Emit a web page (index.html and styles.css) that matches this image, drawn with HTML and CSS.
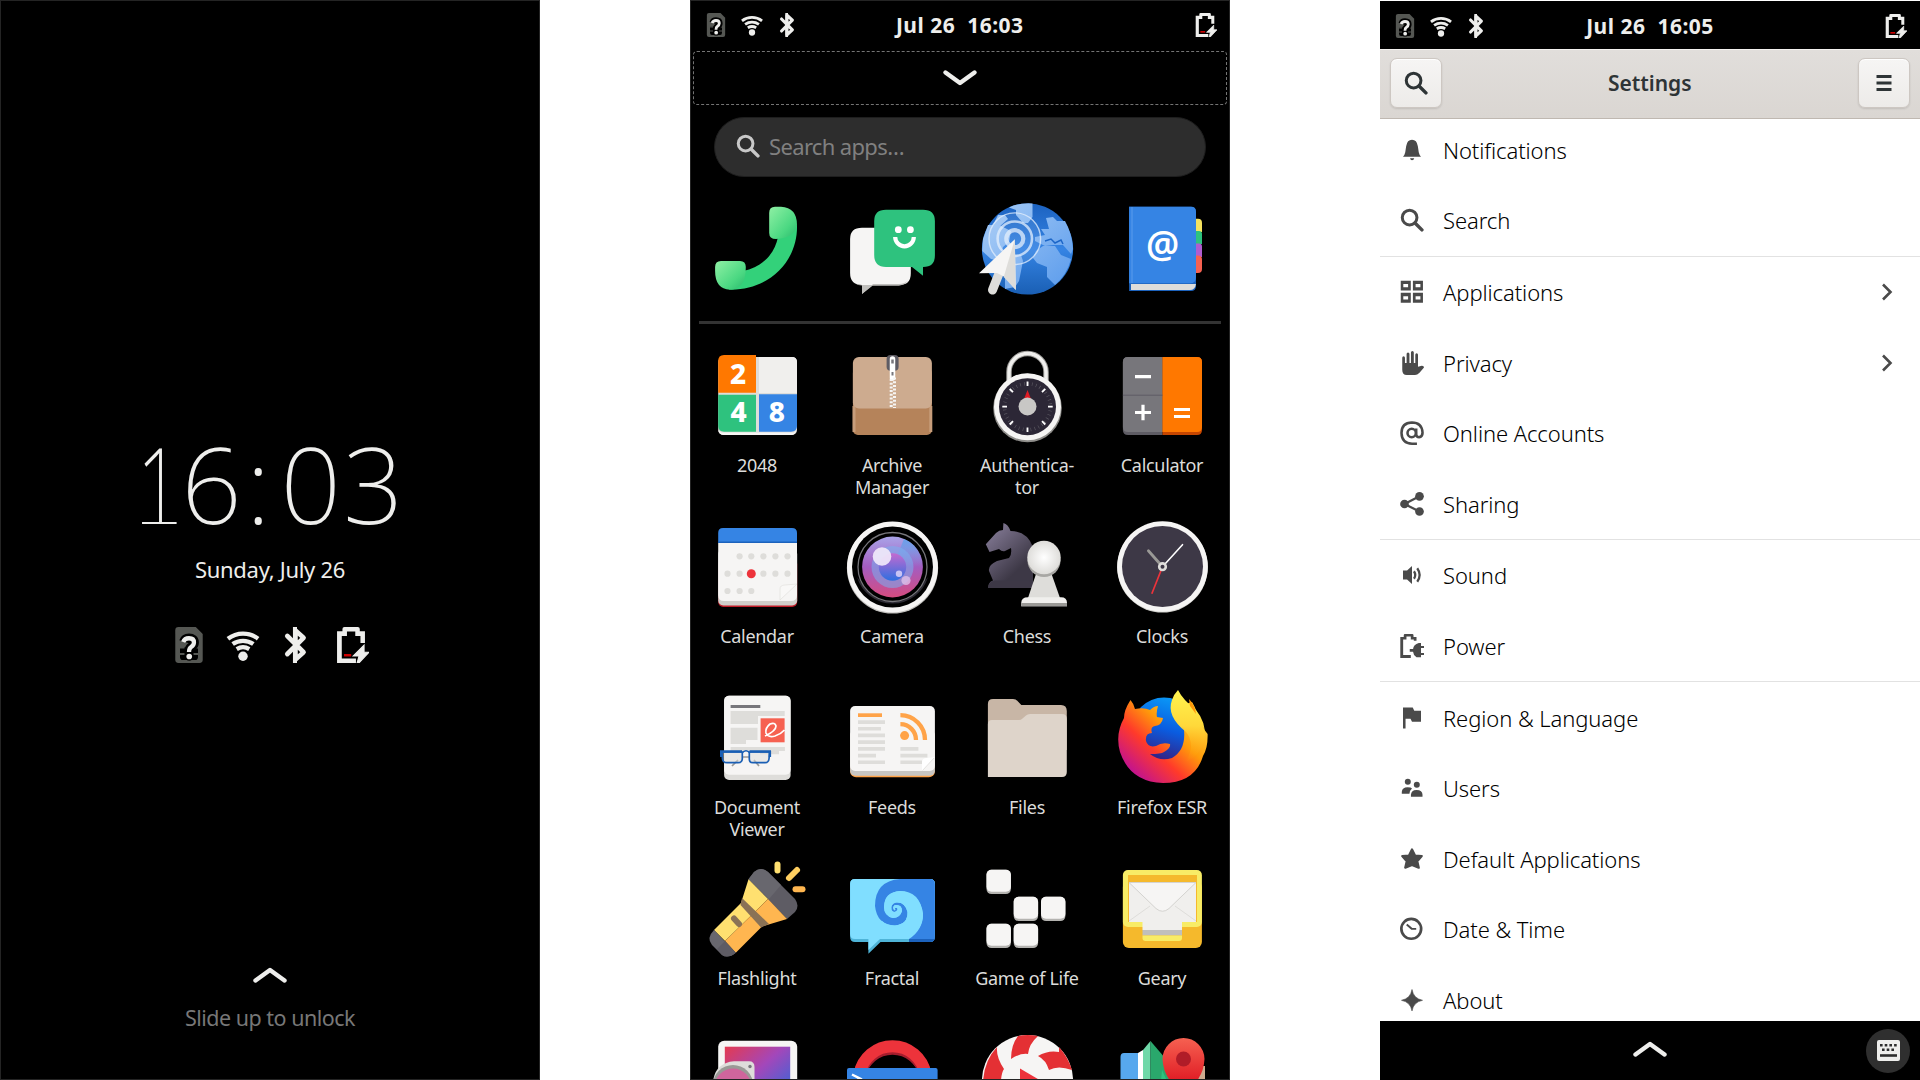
FILE: index.html
```html
<!DOCTYPE html>
<html lang="en">
<head>
<meta charset="utf-8">
<title>Phosh</title>
<link rel="stylesheet" href="styles.css">
</head>
<body>
<svg class="defs" aria-hidden="true">
  <symbol id="sim" viewBox="0 0 16 16">
    <path d="M3.3 0H11L14.1 3.1V14.6Q14.1 16 12.7 16H3.3Q1.9 16 1.9 14.6V1.4Q1.9 0 3.3 0Z" fill="#555753"/>
    <path d="M4 9h8v4.2q0 1.5-1.3 1.5H5.3Q4 14.7 4 13.200Z" fill="#000"/>
    <path d="M4 9.200h2M4 12h2M10 9.200h2M10 12h2" stroke="#555753" stroke-width=".8"/>
    <path d="M5.700 6.500Q6.200 5 8 5q2.300 0 2.300 1.900 0 1.200-1.200 1.900-1 .6-1 1.900" fill="none" stroke="#000" stroke-width="4.200"/>
    <circle cx="8.100" cy="13.100" r="1.900" fill="#000"/>
    <path d="M5.400 6.700Q6 5 8 5q2.200 0 2.200 1.900 0 1.200-1.200 1.900-1 .6-1 2.300" fill="none" stroke="#eeeeec" stroke-width="1.900"/>
    <circle cx="8.100" cy="13.100" r="1.250" fill="#eeeeec"/>
  </symbol>
  <symbol id="wifi" viewBox="0 0 16 16">
    <g fill="none" stroke="#eeeeec" stroke-width="1.900"><path d="M1.300 5.200A11 11 0 0 1 14.700 5.200"/><path d="M3.400 7.600A8 8 0 0 1 12.600 7.600"/><path d="M5.200 9.800A5.500 5.500 0 0 1 10.800 9.800"/></g>
    <circle cx="8" cy="13" r="2.100" fill="#eeeeec"/>
  </symbol>
  <symbol id="bt" viewBox="0 0 16 16">
    <path d="M3.700 4L10.900 11.200 7.300 14.500V1.500L10.900 4.800 3.700 12" fill="none" stroke="#eeeeec" stroke-width="2.100" stroke-linejoin="round" stroke-linecap="round"/>
    <path d="M6.200 0H8V16H6.200Z" fill="#eeeeec"/>
  </symbol>
  <symbol id="battery" viewBox="0 0 16 16">
    <path d="M1.800 1.900H4.200V.9Q4.200 0 5.100 0H11Q11.900 0 11.900.9V1.900H14.200V7.100H12.200V4H9.900V2H6.200V4H3.900V14H10.200V16H1.800Z" fill="#eeeeec"/>
    <path d="M4.900 12h3.200v1.100H4.900Z" fill="#c00"/>
    <path d="M13.800 8.100L9 12.900H11.600L10.700 16H11.500L16 11.200H13.800Z" fill="#eeeeec" stroke="#eeeeec" stroke-width=".5"/>
  </symbol>
  <symbol id="search" viewBox="0 0 16 16">
    <circle cx="6.400" cy="6.400" r="4.900" fill="none" stroke="currentColor" stroke-width="2"/>
    <path d="M10 10L14.600 14.600" stroke="currentColor" stroke-width="2.300" stroke-linecap="round"/>
  </symbol>
  <symbol id="up" viewBox="0 0 34 16"><path d="M2.500 13.500L17 3 31.500 13.500" fill="none" stroke="#eeeeec" stroke-width="4.400" stroke-linecap="round" stroke-linejoin="round"/></symbol>
  <symbol id="next" viewBox="0 0 12 20"><path d="M2 2.500L9.500 10 2 17.500" fill="none" stroke="#4a4a4a" stroke-width="2.600"/></symbol>
  <linearGradient id="gPhone" x1="0" y1="0" x2="1" y2="1"><stop offset="0" stop-color="#8ff0a4"/><stop offset=".65" stop-color="#4bd882"/><stop offset="1" stop-color="#2ab86c"/></linearGradient>
  <linearGradient id="gGlobe" x1="0" y1="0" x2="0" y2="1"><stop offset="0" stop-color="#1c62c0"/><stop offset=".5" stop-color="#3584e4"/><stop offset="1" stop-color="#1a5fb4"/></linearGradient>
  <linearGradient id="gLand" x1="0" y1="0" x2="1" y2="1"><stop offset="0" stop-color="#a8ccf6"/><stop offset="1" stop-color="#5a9bec"/></linearGradient>
  <linearGradient id="gLens" x1="0" y1="0" x2="0" y2="1"><stop offset="0" stop-color="#a9a3e8"/><stop offset=".5" stop-color="#a45cc0"/><stop offset="1" stop-color="#d54c80"/></linearGradient>
  <linearGradient id="gSheen" x1="0" y1="0" x2="0" y2="1"><stop offset="0" stop-color="#62a0ea" stop-opacity=".9"/><stop offset="1" stop-color="#62a0ea" stop-opacity="0"/></linearGradient>
  <linearGradient id="gLens2" x1="0" y1="0" x2="0" y2="1"><stop offset="0" stop-color="#c46ad0"/><stop offset="1" stop-color="#2f6fe0"/></linearGradient>
  <linearGradient id="gKnight" x1="0" y1="0" x2=".7" y2="1"><stop offset="0" stop-color="#8d83a0"/><stop offset=".8" stop-color="#3d3846"/></linearGradient>
  <radialGradient id="gPawn"><stop offset="0" stop-color="#fff"/><stop offset="1" stop-color="#deddda"/></radialGradient>
  <linearGradient id="gFox" x1=".8" y1=".1" x2=".1" y2=".8"><stop offset="0" stop-color="#ffd43a"/><stop offset=".35" stop-color="#ff9a0a"/><stop offset=".65" stop-color="#ff3a2a"/><stop offset="1" stop-color="#c4148c"/></linearGradient>
  <linearGradient id="gFox2" x1="0" y1="0" x2="0" y2="1"><stop offset="0" stop-color="#fff44f"/><stop offset=".5" stop-color="#ffd83a"/><stop offset="1" stop-color="#ff9a0a" stop-opacity="0"/></linearGradient>
  <linearGradient id="gFoxBlue" x1=".7" y1="0" x2=".4" y2="1"><stop offset="0" stop-color="#0a9cf8"/><stop offset=".5" stop-color="#0a5ce0"/><stop offset="1" stop-color="#3a1a78"/></linearGradient>
  <linearGradient id="gShot" x1="0" y1="0" x2="1" y2="1"><stop offset="0" stop-color="#e43a50"/><stop offset=".45" stop-color="#a347ba"/><stop offset="1" stop-color="#1a6fe0"/></linearGradient>
  <linearGradient id="gPin" x1="0" y1="0" x2="0" y2="1"><stop offset="0" stop-color="#f66151"/><stop offset="1" stop-color="#e01b24"/></linearGradient>
</svg>

<main class="stage">
  <section class="phone lock">
    <div class="clock"><span class="one">1</span>6<span class="colon">:</span><span class="zero">0</span>3</div>
    <div class="date">Sunday, July 26</div>
    <div class="lock-icons"><svg><use href="#sim"/></svg><svg><use href="#wifi"/></svg><svg><use href="#bt"/></svg><svg><use href="#battery"/></svg></div>
    <div class="unlock"><svg class="chev"><use href="#up"/></svg><span>Slide up to unlock</span></div>
  </section>

  <section class="phone overview">
    <header class="status"><div class="left"><svg><use href="#sim"/></svg><svg><use href="#wifi"/></svg><svg><use href="#bt"/></svg></div><div class="time">Jul 26&nbsp; 16:03</div><svg><use href="#battery"/></svg></header>
    <div class="fold"><svg class="chev down"><use href="#up"/></svg></div>
    <div class="searchbar"><svg><use href="#search"/></svg><span>Search apps…</span></div>
    <div class="grid favs">
      <div class="app"><svg viewBox="0 0 96 96"><path d="M69 36C66 52 54 66 34 70L20 88.600C58 90 89 62 88 24Z" fill="#33d17a"/><path d="M66 5.700H72Q88 6.500 88 24 86 37 67 38 60.200 38 60.200 32V12Q60.200 5.700 66 5.700Z" fill="url(#gPhone)"/><path d="M12 60H31Q36.800 60 36.800 66 37 88 21 88.700 6.100 88 6.100 70V66Q6.100 60 12 60Z" fill="url(#gPhone)"/></svg></div>
      <div class="app"><svg viewBox="0 0 96 96"><path d="M18 26.700H55Q66.800 26.700 66.800 38V72.500Q66.800 84 55 84H28.500L18 92.700V84Q6.100 84 6.100 72V38Q6.100 26.700 18 26.700Z" fill="#f6f5f4"/><path d="M11 82Q14 84 18 84H28L29 83H55Q61 83 64.500 79 61 84 55 84.700H28.500L18 93V84.600Q14 84.500 11 82Z" fill="#c0bfbc"/><path d="M42 8.700H79Q90.900 8.700 90.900 20V54.500Q90.900 66 79 66V74.700L68 66H42Q30.200 66 30.200 54V20Q30.200 8.700 42 8.700Z" fill="#2ec27e"/><circle cx="54.300" cy="28.700" r="3.400" fill="#fff"/><circle cx="66.400" cy="28.700" r="3.400" fill="#fff"/><path d="M51.200 36a9.300 9.300 0 0 0 18.600 0" fill="none" stroke="#fff" stroke-width="4.200"/></svg></div>
      <div class="app"><svg viewBox="0 0 96 96"><circle cx="48.500" cy="48" r="45.600" fill="url(#gGlobe)"/><path d="M30 6.500Q40 1.500 53.500 2.400V16L49 22H44L37 14V9ZM19 14H26L29 18 20 26 12 28ZM4 38L9 24 20 24 32 30 30 41 24 46 20 60 12 58 3.200 50ZM67 17L74 16 78 20H86Q93 32 94 48L92 53 84 44H74L66 45 60 42 56 40V36L66 34 62 28H70ZM57 50L64 45H76L82 54 92 58Q88 74 76 84L68 76V66L58 62 54 57ZM34 54H42L44 60 40 80 36 86 26 88 26 70Z" fill="url(#gLand)"/><path d="M66 40L72 38 76 42 82 39 84 43" fill="none" stroke="#1c66c8" stroke-width="1.500"/><circle cx="35.800" cy="37.700" r="25.800" fill="#fff" fill-opacity=".08"/><g fill="none" stroke="#e4effc" stroke-opacity=".75"><circle cx="35.800" cy="37.700" r="25.800" stroke-width="1.400"/><circle cx="35.800" cy="37.700" r="17.200" stroke-width="2.600"/><circle cx="35.800" cy="37.700" r="8.500" stroke-width="4.200"/></g><path d="M21 70L13.500 89" stroke="#deddda" stroke-width="9" stroke-linecap="round"/><path d="M35.800 38.300L0 72.300 18 72 26 76 36.800 89Z" fill="#f6f5f4"/><path d="M35.800 38.300L24.700 76 36.800 89Z" fill="#deddda"/></svg></div>
      <div class="app"><svg viewBox="0 0 96 96"><path d="M78 17.700h6q4 0 4 4V31H78Z" fill="#f6e35f"/><path d="M78 30h7q3 0 3 3v10H78Z" fill="#2ec27e"/><path d="M78 42.500h7q3 0 3 3V56H78Z" fill="#b05cd0"/><path d="M78 54.500h6q4 0 4 4V68q0 4-4 4h-6Z" fill="#f66151"/><path d="M15.100 5.700H77Q82 5.700 82 11V85Q82 90 77 90H15.100Z" fill="#1c62bc"/><path d="M17 83H82Q81 89 76 89H17Z" fill="#deddda"/><path d="M15.100 5.700H77Q82 5.700 82 11V76Q82 82.300 76 82.300H15.100Z" fill="#3584e4"/><path d="M18 6V82" stroke="#5a9bec" stroke-width="1"/><text class="glyph at" x="48.500" y="56.500" font-size="37" text-anchor="middle">@</text></svg></div>
    </div>
    <div class="divider"></div>
    <div class="grid apps">
      <div class="app"><svg viewBox="0 0 96 96"><rect x="9.200" y="9" width="78.800" height="78" rx="5" fill="#deddda"/><path d="M12 84.500H85L87 82Q87 87 82 87H15Q10 87 9.200 82Z" fill="#f6f5f4"/><path d="M50 9H83q5 0 5 5V45H50Z" fill="#f0efed"/><path d="M15 7H47V44.700H9.200V13Q9.200 7 15 7Z" fill="#ff7800"/><path d="M9.200 46.700H47V83.700H15Q9.200 83.700 9.200 78Z" fill="#2ec27e"/><path d="M50 46.300H88V78Q88 83.700 82 83.700H50Z" fill="#3584e4"/><g class="glyph" font-size="28" text-anchor="middle"><text x="29" y="35.700">2</text><text x="29.500" y="74">4</text><text x="67.800" y="74">8</text></g></svg><span>2048</span></div>
      <div class="app"><svg viewBox="0 0 96 96"><rect x="8.900" y="20" width="79" height="67" rx="5" fill="#b5835a"/><path d="M10 58V84M86.800 58V84" stroke="#c79d7b" stroke-width="3"/><rect x="8.900" y="9" width="79" height="51.500" rx="6" fill="#cdab8f"/><rect x="42.600" y="7" width="12" height="15.700" rx="4" fill="#5e5c64"/><path d="M48.500 11V30" stroke="#fff" stroke-width="5.500" stroke-linecap="round"/><path d="M48.500 11.500v4" stroke="#77767b" stroke-width="2.500"/><path d="M48.500 24v3.500" stroke="#77767b" stroke-width="2"/><path d="M47.200 31V60" stroke="#f6f5f4" stroke-width="3" stroke-dasharray="2 1.700"/><path d="M50.500 29.500V60" stroke="#f6f5f4" stroke-width="3" stroke-dasharray="2 1.700"/></svg><span>Archive<br>Manager</span></div>
      <div class="app"><svg viewBox="0 0 96 96"><path d="M30 34V24a18.500 18.500 0 0 1 37 0V34" fill="none" stroke="#9a9996" stroke-width="5.500"/><path d="M30 34V24a18.500 18.500 0 0 1 37 0V34" fill="none" stroke="#f0efed" stroke-width="3.500"/><circle cx="48.500" cy="60" r="34.300" fill="#8e8d8a"/><circle cx="48.500" cy="58.700" r="33.500" fill="#f6f5f4"/><circle cx="48.500" cy="58.700" r="28.500" fill="#2c2736"/><circle cx="48.500" cy="58.700" r="23" fill="none" stroke="#5e5c64" stroke-width="3.500" stroke-dasharray=".6 3.410"/><path d="M48.500 33.500v4.500M48.500 79.500V84M23.300 58.700H28M69 58.700h4.700M30.700 40.900l3.300 3.300M63 73.200l3.300 3.300M66.300 40.900L63 44.200M34 73.200l-3.300 3.300" stroke="#fff" stroke-width="1.800"/><path d="M48.500 42L45 51H52Z" fill="#e01b24"/><circle cx="48.500" cy="58.500" r="9" fill="#c8c7c5"/></svg><span>Authentica-<br>tor</span></div>
      <div class="app"><svg viewBox="0 0 96 96"><path d="M14 9H48.500V87H14Q8.900 87 8.900 82V14Q8.900 9 14 9Z" fill="#5e5c64"/><path d="M48.500 9H83Q88 9 88 14V82Q88 87 83 87H48.500Z" fill="#c64600"/><path d="M14 9H48.500V84H14Q8.900 84 8.900 79V14Q8.900 9 14 9Z" fill="#77767b"/><path d="M48.500 9H83Q88 9 88 14V79Q88 84 83 84H48.500Z" fill="#ff7800"/><path d="M8.900 47.200H48.500" stroke="#5e5c64" stroke-width="1"/><path d="M21 28.700H37M21 64.500H37M29 56.800V72.200M60 61.500H76M60 68.500H76" stroke="#fff" stroke-width="3.200"/></svg><span>Calculator</span></div>

      <div class="app"><svg viewBox="0 0 96 96"><rect x="9.200" y="40" width="79" height="48" rx="5" fill="#c01c28"/><rect x="9.200" y="30" width="79" height="56.500" rx="5" fill="#d0cfcb"/><path d="M9.200 24H88V76Q88 82 82 82H15Q9.200 82 9.200 76Z" fill="#f6f5f4"/><path d="M14 9H83Q88 9 88 14V24H9.200V14Q9.200 9 14 9Z" fill="#3584e4"/><path d="M9.200 23.300H88" stroke="#1c62bc" stroke-width="1.500"/><g fill="#deddda"><circle cx="30.600" cy="37.300" r="3.100"/><circle cx="42.300" cy="37.300" r="3.100"/><circle cx="54.400" cy="37.300" r="3.100"/><circle cx="66.400" cy="37.300" r="3.100"/><circle cx="78.500" cy="37.300" r="3.100"/><circle cx="18.500" cy="54.700" r="3.100"/><circle cx="30.600" cy="54.700" r="3.100"/><circle cx="54.400" cy="54.700" r="3.100"/><circle cx="66.400" cy="54.700" r="3.100"/><circle cx="78.500" cy="54.700" r="3.100"/><circle cx="18.500" cy="72" r="3.100"/><circle cx="30.600" cy="72" r="3.100"/><circle cx="42.300" cy="72" r="3.100"/></g><circle cx="42.300" cy="54.700" r="4.500" fill="#ed333b"/><path d="M88 65L71 81V70Q71 66 76 66Z" fill="#fff" stroke="#e4e3e0" stroke-width=".8" fill-opacity=".3"/></svg><span>Calendar</span></div>
      <div class="app"><svg viewBox="0 0 96 96"><circle cx="48.500" cy="49" r="45.600" fill="#c0bfbc"/><circle cx="48.500" cy="48" r="45.400" fill="#f6f5f4"/><circle cx="48.500" cy="48" r="40.500" fill="#000"/><path d="M13 58A37 37 0 0 0 84 58L78 66A34 34 0 0 1 19 66Z" fill="#2c2a33"/><circle cx="48.500" cy="48" r="34.500" fill="#000" stroke="#77767b" stroke-width="1.300"/><circle cx="48.500" cy="48" r="30.400" fill="url(#gLens)"/><path d="M48.500 48L60 20Q76 26 78.900 48Z" fill="url(#gSheen)"/><circle cx="48.500" cy="48" r="21" fill="#7ab0f0" fill-opacity=".55"/><circle cx="48.500" cy="48" r="13.700" fill="url(#gLens2)"/><circle cx="38" cy="37.500" r="9.300" fill="#f0e8fa" fill-opacity=".93"/><circle cx="55" cy="54.700" r="3.200" fill="#c8c4f4"/><circle cx="62" cy="61.500" r="4.600" fill="#e0c0e8" fill-opacity=".8"/></svg><span>Camera</span></div>
      <div class="app"><svg viewBox="0 0 96 96"><path d="M24.400 4Q29 5 31.500 12 48 12 54 28V62L55 69H9Q9 63 14 61.500L10 52Q9 46 18 42L30 39Q33 36 32 29L26 32Q23 33 20 30L10.500 33 6.800 25.300 17 14Q20 11 24 11Z" fill="url(#gKnight)"/><path d="M9 69Q10 62 16 61.500H50L55 69Z" fill="#3d3846"/><path d="M58 52H71.500L81 79H49Z" fill="#deddda"/><circle cx="65" cy="41.500" r="16.500" fill="#a8a7a4"/><circle cx="65" cy="38.500" r="16.700" fill="url(#gPawn)"/><path d="M42.200 87.300V84Q42.200 78.300 49 78.300H82Q88 78.300 88 84V87.300Z" fill="#f0efed"/><path d="M42.200 84H88V87.300H42.200Z" fill="#9a9996"/></svg><span>Chess</span></div>
      <div class="app"><svg viewBox="0 0 96 96"><circle cx="48.500" cy="48.300" r="45.300" fill="#d0cfcb"/><circle cx="48.500" cy="47.500" r="45.300" fill="#f6f5f4"/><circle cx="48.500" cy="47.500" r="40.500" fill="#3d3846"/><path d="M48.500 47.700L34.400 31.700" stroke="#9a9996" stroke-width="2.800" stroke-linecap="round"/><path d="M48.500 47.700L68.500 25.700" stroke="#fff" stroke-width="1.600" stroke-linecap="round"/><path d="M48.500 47.700L37.800 74.700" stroke="#ed333b" stroke-width="1.700"/><circle cx="48.500" cy="47.700" r="3.300" fill="#3d3846" stroke="#deddda" stroke-width="2.600"/></svg><span>Clocks</span></div>

      <div class="app"><svg viewBox="0 0 96 96"><rect x="15.100" y="5.700" width="66.500" height="84.300" rx="5" fill="#deddda"/><rect x="15.100" y="5.700" width="66.500" height="79" rx="5" fill="#f6f5f4"/><path d="M21.600 15H51.300V18H21.600Z" fill="#77767b"/><path d="M21.600 21H75.700V26H49V34H21.600ZM21.600 37.700H48.500V50H37V54H21.600ZM51 57H75.700V61H70V64.300H51Z" fill="#deddda"/><path d="M21.600 57H75.700V61H21.600Z" fill="#deddda"/><rect x="51.600" y="28.300" width="24" height="24" fill="#f66151"/><path d="M56 46Q67 41 67 36 66 32 61 34 56 38 57 43 59 48 66 46 72 44 75.500 40" fill="none" stroke="#fff" stroke-width="1.700"/><path d="M23 76L29 70M50 76L45 70M34 67H41" stroke="#9a9996" stroke-width="1.700"/><g fill="#deddda" fill-opacity=".5" stroke="#1a5fb4" stroke-width="1.700"><path d="M13 62H33.300V69Q33 72.700 29 72.700H18Q14 72.700 13.500 69ZM40.300 62H60.600L60 69Q59.500 72.700 56 72.700H44Q40.300 72.700 40.300 69Z"/><path d="M33 63Q37 58.500 41 63" fill="none"/></g><path d="M11 61.500H33M40.500 61.500H62" stroke="#1a5fb4" stroke-width="2.400"/><path d="M12.200 61V67M60.900 61V67" stroke="#1a5fb4" stroke-width="2.400"/></svg><span>Document<br>Viewer</span></div>
      <div class="app"><svg viewBox="0 0 96 96"><rect x="6.100" y="40" width="84.800" height="47.200" rx="6" fill="#ffa348"/><rect x="6.100" y="40" width="84.800" height="45.800" rx="5" fill="#c8c7c4"/><rect x="6.100" y="16" width="84.800" height="65" rx="5" fill="#f6f5f4"/><path d="M14 23.300H38V27H14Z" fill="#ffa348"/><path d="M14 30.200h27v3.700H14ZM14 36.900h23v3.700H14ZM14 43.600h27v3.700H14ZM14 50.300h27v3.700H14ZM14 57h27v3.700H14ZM14 63.700h18v3.700H14ZM14 70.400h27v3.700H14ZM56.400 57h18v3.700h-18ZM56.400 63.700h27v3.700h-27ZM56.400 70.400h22v3.700h-22Z" fill="#deddda"/><circle cx="60.600" cy="45.600" r="4.500" fill="#ffa348"/><path d="M56.400 34.200A15.700 15.700 0 0 1 72 50M56.400 25.200A24.700 24.700 0 0 1 81 50" fill="none" stroke="#ffa348" stroke-width="4.300"/><path d="M90.900 67L78 81V72Q78 68 83 68Z" fill="#fff"/><path d="M90 68L78.500 80.500" stroke="#deddda" stroke-width=".8"/></svg><span>Feeds</span></div>
      <div class="app"><svg viewBox="0 0 96 96"><path d="M14 9H34Q37 9 38.500 11L42.300 15H82Q87.800 15 87.800 21V60H8.900V14Q8.900 9 14 9Z" fill="#c8b6a6"/><path d="M13 30H40Q42 30 43.500 28.500L47 25.500Q48.500 24 51 24H83Q87.800 24 87.800 29V82Q87.800 87 83 87H8.900V34Q8.900 30 13 30Z" fill="#ded4ca"/></svg><span>Files</span></div>
      <div class="app"><svg viewBox="0 0 96 96"><circle cx="50" cy="40" r="32.500" fill="url(#gFoxBlue)"/><path d="M16.500 10Q20 14 21 19 30 17 36 20 40 16 44 16 42 23 43 27L49 28Q48 35 41 36 36 37 38 43 31 43 32 51 34 58 42 56 48 52 56 54 57 58 50 62 47 64 36 64 46 72 58 68 72 60 70 40 66 29 72 14L78 12Q84 22 86 34L93.600 44Q94 58 89 66 81 93 49 93 16 92 6 62 1 44 10 28 10 20 16.500 10Z" fill="url(#gFox)"/><path d="M64 0Q69 10 82 20 92 32 91 48 86 66 72 72 82 54 72 42 52 26 58 10 60 4 64 0Z" fill="url(#gFox2)"/><path d="M75 9Q81 15 82 24L76 16Z" fill="#ff9a0a"/></svg><span>Firefox ESR</span></div>

      <div class="app"><svg viewBox="0 0 96 96"><path d="M39.500 18.300L45 11Q52 5 59 11L86 38Q91 45 86 51L78 58Z" fill="#5e5c64"/><path d="M39.500 18.300L45 11Q52 5 59 11L72 24 60 38Z" fill="#68676e"/><path d="M39.500 18.300L32 42 5 69 16 80 59 38Z" fill="#ffe070"/><path d="M59 38L78 58 53 65.500 26.800 91.700 16 80Z" fill="#ffb650"/><path d="M33 37L60 63 52 66.500 31.500 44Z" fill="#8a7256"/><path d="M5 69L26.800 91.700Q19 98 13 94L3 84Q-3 77 5 69Z" fill="#68676e"/><path d="M16 80L26.800 91.700Q19 98 13 94L8 88Z" fill="#5e5c64"/><path d="M25 57.500L30 63" stroke="#8a7256" stroke-width="6" stroke-linecap="round"/><g stroke-width="6" stroke-linecap="round"><path d="M68.500 3.500V9.500" stroke="#ffe070"/><path d="M88 9L80 17" stroke="#ffcf60"/><path d="M86.500 28.300H93.500" stroke="#ffb650"/></g></svg><span>Flashlight</span></div>
      <div class="app"><svg viewBox="0 0 96 96"><path d="M11 18H86Q90.900 18 90.900 23V76Q90.900 81 86 81H36.500L24.400 92.700V81H11Q6.100 81 6.100 76V23Q6.100 18 11 18Z" fill="#4fb4d8"/><path d="M11 18H86Q90.900 18 90.900 23V73Q90.900 78 86 78H36L24.400 89V78H11Q6.100 78 6.100 73V23Q6.100 18 11 18Z" fill="#80deff"/><path d="M56 18H86Q90.900 18 90.900 23V76Q90.900 81 86 81H65V78Q79 69 79 53 76 30 56 30Z" fill="#3584e4"/><path d="M56 18Q31 20 31 45 33 64 51 64.500 64 63 63.500 51 61 40.500 52 41.500 46 43 47.500 49 50 53 53.500 49 54 46 51 47L51 48Q52 50 50 49 48 46 51 44 58 43 58 50 56 57 49 57 40 55 40 46 41 31 56 30Z" fill="#3584e4"/><path d="M56 30Q40 31 40 46 40 55 49 57 56 57 58 50 58 43 51 44 48 46 50 49 52 50 51 47 54 46 53.500 49 50 53 47.500 49 46 43 52 41.500 61 40.500 63.500 51 64 63 51 64.500 44 65 38 60V74H66Q79 68 79 53 76 32 56 30Z" fill="#80deff"/><path d="M65 78H90.500Q89.500 81 86 81H65Z" fill="#1c62bc"/></svg><span>Fractal</span></div>
      <div class="app"><svg viewBox="0 0 96 96"><g fill="#b4b3b0"><rect x="7.500" y="8.700" width="24.400" height="24.400" rx="5"/><rect x="34.700" y="35.700" width="24.400" height="24.400" rx="5"/><rect x="62" y="35.700" width="24.400" height="24.400" rx="5"/><rect x="7.500" y="62.700" width="24.400" height="24.400" rx="5"/><rect x="34.700" y="62.700" width="24.400" height="24.400" rx="5"/></g><g fill="#f6f5f4"><rect x="7.500" y="8.700" width="24.400" height="22" rx="5"/><rect x="34.700" y="35.700" width="24.400" height="22" rx="5"/><rect x="62" y="35.700" width="24.400" height="22" rx="5"/><rect x="7.500" y="62.700" width="24.400" height="22" rx="5"/><rect x="34.700" y="62.700" width="24.400" height="22" rx="5"/></g></svg><span>Game of Life</span></div>
      <div class="app"><svg viewBox="0 0 96 96"><rect x="8.900" y="20" width="79" height="67" rx="6" fill="#f5b92c"/><rect x="8.900" y="9" width="79" height="57" rx="5" fill="#f8ec66"/><path d="M14 14H83V61H14Z" fill="#f5b92c"/><path d="M15 21H82V61H68V69H28.500V61H15Z" fill="#f0efed"/><path d="M28.500 69H68V74.500H28.500Z" fill="#c0bfbc"/><path d="M28.500 74.500H68V77Q68 80 65 80H31.500Q28.500 80 28.500 77Z" fill="#f8ec66"/><path d="M15 60L36 45M82 60L61 45" stroke="#deddda"/><path d="M15 21.500L42 47.500Q48.500 53 55 47.500L82 21.500Z" fill="#f6f5f4" stroke="#d4d3d0" stroke-width="1"/></svg><span>Geary</span></div>

      <div class="app"><svg viewBox="0 0 96 96"><rect x="9.200" y="8.700" width="79" height="70" rx="6" fill="#f6f5f4"/><rect x="15.800" y="14.700" width="65.400" height="60" fill="url(#gShot)"/><path d="M25 29.300H40Q45.500 29.300 45.500 35V80H4V50Q6 31 25 29.300Z" fill="#deddda"/><circle cx="41" cy="34.500" r="1.700" fill="#77767b"/><circle cx="24" cy="53" r="20" fill="#9a9996"/><circle cx="24" cy="55" r="18.500" fill="#d0659c"/></svg></div>
      <div class="app"><svg viewBox="0 0 96 96"><path d="M15.500 44A33.500 33.500 0 0 1 81.500 44" fill="none" stroke="#a51d2d" stroke-width="13"/><path d="M15.500 42A33.500 33.500 0 0 1 81.500 42" fill="none" stroke="#ed333b" stroke-width="12"/><path d="M24 38Q33 24 48.500 24T73 38Z" fill="#000"/><rect x="3" y="36" width="90.600" height="50" rx="2" fill="#3584e4"/><path d="M8 42.500L16 46.500 8 51" fill="none" stroke="#fff" stroke-width="2.500"/></svg></div>
      <div class="app"><svg viewBox="0 0 96 96"><circle cx="48.500" cy="48.600" r="45.600" fill="#f6f5f4"/><path d="M39 4Q48 2 59 4Q50 12 49 22Q41 21 32 27Q32 13 39 4ZM80 15Q89 25 93 38Q79 33 70 38Q67 28 59 24Q69 18 80 20ZM18 15Q17 25 25 37Q21 43 22 60L4 57Q3 31 18 15Z" fill="#e43034"/><path d="M41 36.500L64 50H41Z" fill="#ed333b"/></svg></div>
      <div class="app"><svg viewBox="0 0 96 96"><path d="M6.500 25Q6.500 21 10 21H25V60H6.500Z" fill="#57a8ee"/><path d="M24 21L29 18V60H24Z" fill="#fff"/><path d="M29 18L36.500 9V60H29Z" fill="#6fd8a8"/><path d="M36.500 9L57 33V60H36.500Z" fill="#2aa86c"/><path d="M48 38L58 60H46Z" fill="#2ec27e"/><path d="M86 34H91V60H82Z" fill="#cdab8f"/><path d="M69.500 6A21 21 0 0 1 90.500 27Q90 40 82 50H57Q49 40 48.500 27A21 21 0 0 1 69.500 6Z" fill="url(#gPin)"/><circle cx="69.500" cy="27" r="7.500" fill="#b01c28"/></svg></div>
    </div>
  </section>

  <section class="phone settings">
    <header class="status"><div class="left"><svg><use href="#sim"/></svg><svg><use href="#wifi"/></svg><svg><use href="#bt"/></svg></div><div class="time">Jul 26&nbsp; 16:05</div><svg><use href="#battery"/></svg></header>
    <div class="titlebar"><div class="btn"><svg><use href="#search"/></svg></div><h1>Settings</h1><div class="btn"><svg viewBox="0 0 24 24"><path d="M4.500 5.500h15M4.500 12h15M4.500 18.500h15" stroke="currentColor" stroke-width="2.800"/></svg></div></div>
    <ul class="list">
      <li><svg viewBox="0 0 16 16"><path d="M8 1.200Q11.200 1.200 11.900 5.500L12.500 9.500Q12.900 11.500 14 12.500H2Q3.100 11.500 3.500 9.500L4.100 5.500Q4.800 1.200 8 1.200ZM6.700 13.500H9.500Q9.200 14.800 8 14.800 7 14.800 6.700 13.500Z"/></svg>Notifications</li>
      <li><svg><use href="#search"/></svg>Search</li>
      <li class="sep"><svg viewBox="0 0 16 16"><path fill-rule="evenodd" d="M.5.500H7.200V7H.5ZM2.200 2.700V4.900H5.400V2.700ZM8.600.500H15.300V7H8.600ZM10.400 2.700V4.900H13.600V2.700ZM.5 8.500H7.200V15.200H.5ZM2.200 10.800V13H5.400V10.800ZM8.600 8.500H15.300V15.200H8.600ZM10.400 10.800V13H13.600V10.800Z"/></svg>Applications<svg class="next"><use href="#next"/></svg></li>
      <li><svg viewBox="0 0 16 16"><path d="M1.500 4.500q0-1 .9-1t.9 1V8H4.400V2q0-1 .95-1t.95 1V8H7.300V1q0-1 .95-1t.95 1V8H10.200V2.500q0-1 .9-1t.9 1V10.500L14.500 9.800Q16 9.700 16 11L13 14.500Q11.500 16 10 16H4.500Q1.500 16 1.500 12.500Z"/></svg>Privacy<svg class="next"><use href="#next"/></svg></li>
      <li><svg viewBox="0 0 16 16"><g fill="none" stroke="#4a4a4a" stroke-width="1.700"><circle cx="7.800" cy="8" r="2.800"/><path d="M10.800 5V9Q11 10.800 12.700 10.800 15.200 10.500 15 7.500 14.500 1 8 1 1 1.200 1 8 1.200 15 8 15.100H11.300"/></g></svg>Online Accounts</li>
      <li><svg viewBox="0 0 16 16"><path d="M13 2.900L3 8 13 13" fill="none" stroke="#4a4a4a" stroke-width="1.500"/><circle cx="3" cy="8" r="2.900"/><circle cx="13" cy="2.900" r="2.900"/><circle cx="13" cy="13" r="2.900"/></svg>Sharing</li>
      <li class="sep"><svg viewBox="0 0 16 16"><path d="M2 5H4.700L8 2V14L4.700 11H2Z"/><path d="M9.300 5.500Q11 8 9.300 10.500M11.500 3.500Q14.700 8 11.500 12.500" fill="none" stroke="#4a4a4a" stroke-width="1.500"/></svg>Sound</li>
      <li><svg viewBox="0 0 16 16"><path d="M.2 2H2.500V.8Q2.500 0 3.300 0H8.200Q9 0 9 .8V2H11V4.500H9.200V3.700H7.200V1.700H4.300V3.700H2.100V14H7.200V16H.2Z"/><path d="M12.500 6H14V8H16V9.400H14V12.600H16V14H14V15.500H11Q8.800 14 8.700 11.800H6.500V10H8.700Q9 7 12.500 6Z"/></svg>Power</li>
      <li class="sep"><svg viewBox="0 0 16 16"><path d="M2 1H8.500L9.500 3.200H14V10.500H8L7 8.500H3.700V15H2Z"/></svg>Region &amp; Language</li>
      <li><svg viewBox="0 0 16 16"><circle cx="5.200" cy="3.900" r="2"/><circle cx="11.200" cy="5.900" r="2"/><path d="M1.200 11.800V10.500Q1.500 7.500 5 7.500 7.500 7.500 8 8.300 6.500 9.500 6.300 11.800ZM7.300 13.800V12.500Q7.500 9.300 11 9.300 15 9.300 15 12.500V13.800Z"/></svg>Users</li>
      <li><svg viewBox="0 0 16 16"><path d="M8 1.600L10 5.700 14.500 6 11.500 9.500 12.500 13.800 8 12 3.500 13.800 4.500 9.500 1.500 6 6 5.700Z" stroke="#4a4a4a" stroke-width="1.500" stroke-linejoin="round"/></svg>Default Applications</li>
      <li><svg viewBox="0 0 16 16"><circle cx="7.500" cy="7.900" r="6.600" fill="none" stroke="#4a4a4a" stroke-width="1.800"/><path d="M4.500 5L7.800 7.900H10.800" fill="none" stroke="#4a4a4a" stroke-width="1.300"/></svg>Date &amp; Time</li>
      <li><svg viewBox="0 0 16 16"><path d="M8 1Q9 7 15 8.200 9 9.400 8 15.300 7 9.400 1 8.200 7 7 8 1Z" stroke="#4a4a4a" stroke-width=".4"/></svg>About</li>
    </ul>
    <footer class="bottom"><svg class="chev"><use href="#up"/></svg><div class="osk"><svg viewBox="0 0 23 21"><rect width="23" height="21" rx="2" fill="#eeeeec"/><path d="M3 5.200H20" stroke="#2d2d2d" stroke-width="2.600" stroke-dasharray="2.600 2.100"/><path d="M5 9.800H18" stroke="#2d2d2d" stroke-width="2.600" stroke-dasharray="2.600 2.100"/><path d="M3 15.500H20" stroke="#2d2d2d" stroke-width="2.600"/></svg></div></footer>
  </section>
</main>
</body>
</html>
```
FILE: styles.css
```css
* { box-sizing: border-box; }
body { margin: 0; background: #fff; font-family: "Noto Sans", "Open Sans", sans-serif; }
.defs { position: absolute; width: 0; height: 0; }
.stage { display: flex; gap: 150px; width: 1920px; height: 1080px; overflow: hidden; }
.phone { width: 540px; height: 1080px; background: #000; color: #eeeeec; display: flex; flex-direction: column; overflow: hidden; box-shadow: inset 0 0 0 1px #242424; }
.chev { width: 34px; height: 16px; display: block; }

/* lock screen */
.lock { align-items: center; padding-top: 423px; }
.clock { font-weight: 160; font-size: 106px; line-height: 120px; height: 120px; white-space: nowrap; }
.one { display: inline-block; position: relative; width: 44.500px; transform: scaleX(.72); transform-origin: left; }
.one::after { content: ""; position: absolute; left: 7px; bottom: 19px; width: 48px; height: 2px; background: #eeeeec; }
.colon { padding: 0 10px 0 4.500px; }
.zero { padding-right: 2px; }
.date { margin-top: 9px; font-size: 22px; line-height: 34px; letter-spacing: -0.3px; }
.lock-icons { display: flex; gap: 18px; margin-top: 41px; }
.lock-icons svg { width: 36px; height: 36px; }
.unlock { margin-top: 304px; display: flex; flex-direction: column; align-items: center; gap: 17px; font-size: 21.500px; letter-spacing: -0.5px; line-height: 36px; color: #777; }

/* status bar */
.status { display: grid; grid-template-columns: 1fr auto 1fr; align-items: center; height: 48px; flex: none; padding: 0 13px 0 13.500px; }
.status svg { width: 24px; height: 24px; }
.status > svg { justify-self: end; }
.status .left { display: flex; gap: 12px; }
.time { font-size: 21px; font-weight: 700; line-height: 48px; letter-spacing: 0.500px; padding: 1px 1px 0 0; }

/* app overview */
.fold { margin: 3px 3px 0; height: 54px; flex: none; border: 1px dashed #747474; border-radius: 4px; display: flex; justify-content: center; align-items: center; }
.down { transform: rotate(180deg); }
.searchbar { margin: 12px 24px 0; height: 60px; flex: none; border: 1px solid #1e1e1e; border-radius: 30px; background: #2d2d2d; display: flex; align-items: center; gap: 9px; padding: 0 0 2px 21px; font-size: 22px; letter-spacing: -0.65px; color: #808080; }
.searchbar svg { width: 24px; height: 24px; color: #c8c8c8; }
.grid { display: grid; grid-template-columns: repeat(4, 135px); flex: none; }
.app { display: flex; flex-direction: column; align-items: center; }
.app svg { width: 96px; height: 96px; margin-right: 1.500px; display: block; overflow: visible; }
.app span { margin-top: 9.500px; font-size: 18px; line-height: 22.700px; text-align: center; color: #dcdcda; white-space: nowrap; letter-spacing: -0.3px; padding-right: 1px; }
.favs { margin-top: 24px; height: 120px; }
.divider { height: 3px; flex: none; margin: 0 9px; background: #333; }
.apps { margin-top: 24px; grid-auto-rows: 171px; height: 731px; overflow: hidden; }
.glyph { font-family: "Noto Sans", sans-serif; font-weight: 800; fill: #fff; }
.at { font-weight: 600; }

/* settings */
.settings { background: #fff; color: #000; box-shadow: none; }
.settings .status { background: #000; color: #eeeeec; height: 49px; border-top: 1px solid #fff; padding: 0 13px; }
.settings .time { padding-right: 0; }
.titlebar { height: 70px; flex: none; border-top: 1px solid #f4f2f0; border-bottom: 1px solid #bfb8b1; background: linear-gradient(#e1dedb, #dad6d2); display: flex; justify-content: space-between; align-items: center; padding: 0 10px 3px 9.500px; color: #2e3436; position: relative; z-index: 1; }
.titlebar h1 { margin: 0; font-size: 21px; font-weight: 650; }
.btn { width: 52px; height: 50px; border: 1px solid #cdc7c2; border-radius: 7px; background: linear-gradient(#f6f5f4, #edebe9); box-shadow: inset 0 1px #fff, 0 1px 2px rgba(0,0,0,.12); display: flex; align-items: center; justify-content: center; }
.btn svg { width: 24px; height: 24px; }
.list { list-style: none; margin: -4.500px 0 0; padding: 0; flex: 1; min-height: 0; overflow: hidden; }
.list li { height: 70.600px; display: flex; align-items: center; gap: 19px; padding: 0 27px 0 20px; font-size: 22px; font-weight: 350; letter-spacing: -0.080px; }
.list li.sep { height: 71.600px; border-top: 1px solid #e2e2e2; }
.list svg { width: 24px; height: 24px; fill: #4a4a4a; color: #4a4a4a; }
.list .next { width: 12px; height: 20px; margin-left: auto; }
.bottom { height: 59px; flex: none; background: #000; display: grid; grid-template-columns: 1fr auto 1fr; align-items: center; padding: 0 10px; }
.bottom .chev { grid-column: 2; margin-bottom: 3px; }
.osk { justify-self: end; width: 44px; height: 44px; border-radius: 50%; background: #2f2f2f; display: flex; align-items: center; justify-content: center; }
.osk svg { width: 23px; height: 21px; }
```
